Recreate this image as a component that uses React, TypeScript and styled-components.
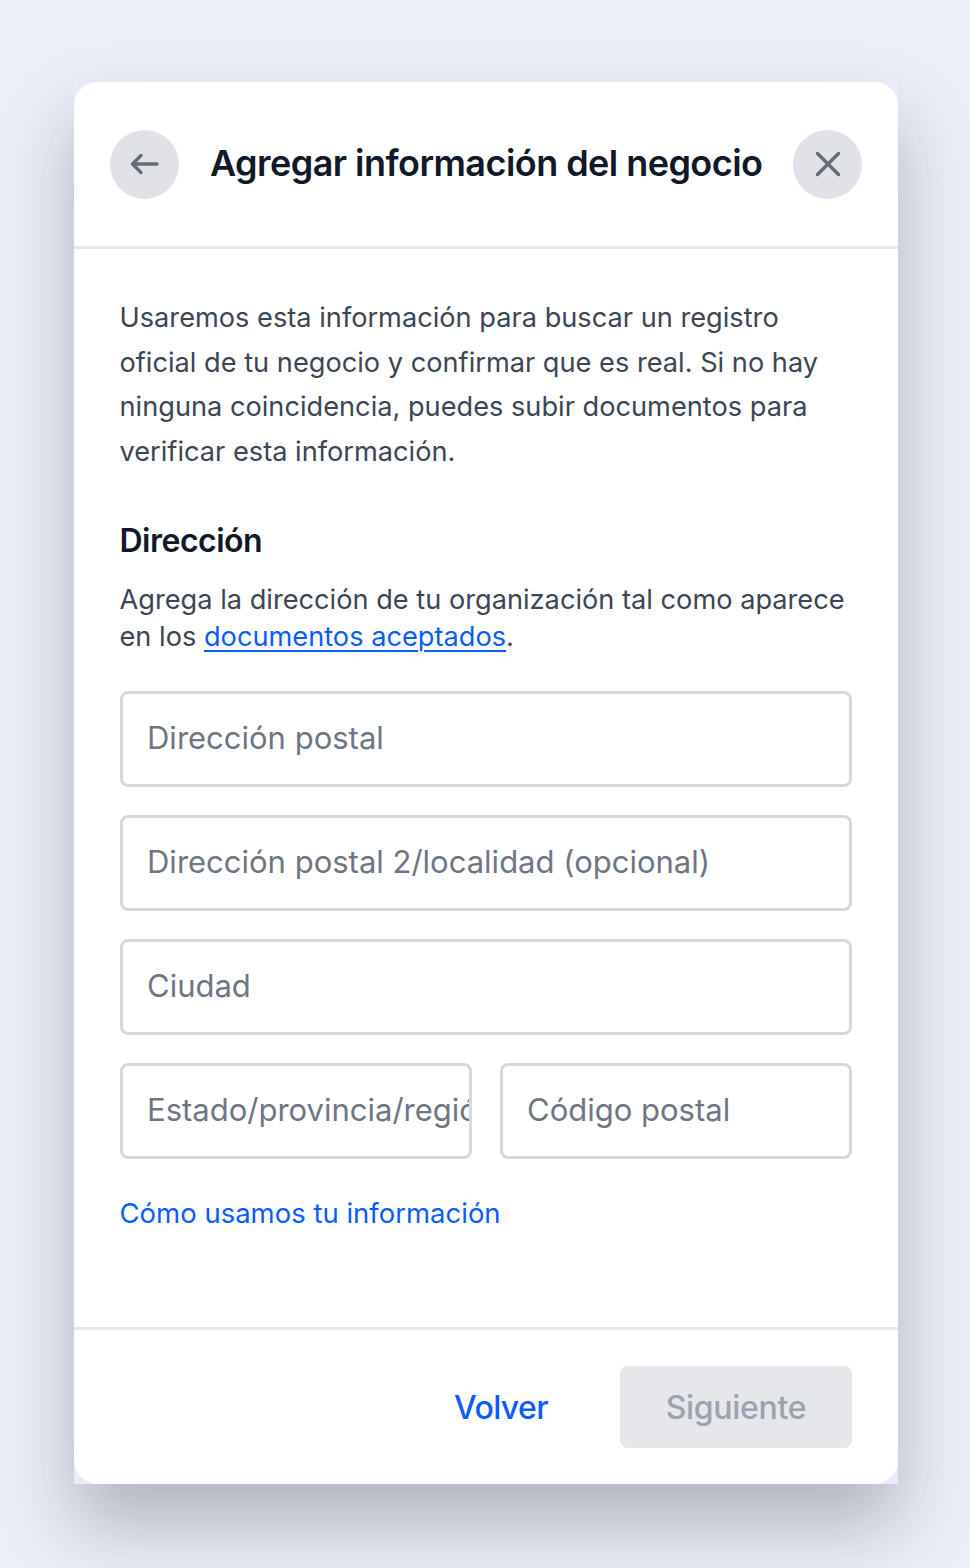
import React from 'react';
import { styled, createGlobalStyle } from 'styled-components';

const GlobalStyle = createGlobalStyle`
    html, body { margin: 0; padding: 0; }
    body { background-color: #ebeff8; font-family: Inter, "Liberation Sans", sans-serif; -webkit-font-smoothing: antialiased; }
`;

const Page = styled.div`
    width: 970px; height: 1568px; box-sizing: border-box; padding: 82px 72px 0 74px; overflow: hidden;
`;

// the shadow sits on a square frame, so the page colour shows behind the rounded corners
const ModalFrame = styled.div`
    width: 824px; height: 1402px; background-color: #e9ecf8;
    box-shadow: 0 40px 70px rgba(45, 45, 60, 0.31);
`;

const Modal = styled.div`
    width: 100%; height: 100%; box-sizing: border-box; background-color: #fff; border-radius: 24px;
    display: flex; flex-direction: column;
`;

const Header = styled.header`
    height: 167px; box-sizing: border-box; border-bottom: 3px solid #e5e7eb; padding: 0 36px;
    display: flex; align-items: center; justify-content: space-between;
`;

const RoundButton = styled.button`
    width: 69px; height: 69px; border-radius: 50%; border: none; background-color: #e1e2e7; color: #666b75; padding: 0;
    display: flex; align-items: center; justify-content: center; flex-shrink: 0;
`;

const Title = styled.h1`
    flex: 1; margin: 0 0 2px 31px; font-size: 36px; line-height: 44px; font-weight: 600; letter-spacing: -0.55px; color: #111827;
`;

const Body = styled.div`
    flex: 1; padding: 47px 46px 0; display: flex; flex-direction: column;
`;

const Intro = styled.p`
    margin: 0 0 0 -0.5px; font-size: 27.2px; line-height: 44.7px; color: #3d4654;
`;

const SectionTitle = styled.h2`
    margin: 46px 0 0 -0.5px; font-size: 32px; line-height: 40px; font-weight: 600; letter-spacing: -0.5px; color: #111827;
`;

const SectionText = styled.p`
    margin: 20px 0 0 -0.5px; font-size: 27.2px; line-height: 37px; color: #3d4654;
`;

const InlineLink = styled.a`
    color: #0b5cff; text-decoration: underline; text-underline-offset: 4px; text-decoration-thickness: 2px;
`;

const Fields = styled.div`
    margin-top: 36px; display: grid; grid-template-columns: 1fr 1fr; gap: 28px;
`;

const Input = styled.input<{ $wide?: boolean }>`
    grid-column: ${({ $wide }) => ($wide ? '1 / -1' : 'auto')};
    width: 100%; height: 96px; box-sizing: border-box; min-width: 0; background-color: #fff;
    border: 3px solid #d5d8df; border-radius: 8px; padding: 0 0 2px 24px;
    font-family: inherit; font-size: 31px; color: #111827; outline: none;
    &::placeholder { color: #6f7683; opacity: 1; }
`;

const InfoLink = styled.a`
    margin: 36px 0 0 -0.5px; font-size: 27.5px; line-height: 36px; color: #0b5cff;
`;

const Footer = styled.footer`
    height: 157px; box-sizing: border-box; border-top: 3px solid #e5e7eb; padding: 36px 46px 0;
    display: flex; justify-content: flex-end; align-items: flex-start; gap: 72px;
`;

const BackLink = styled.a`
    font-size: 32px; line-height: 84px; font-weight: 500; letter-spacing: -0.6px; color: #0b5cff;
`;

const NextButton = styled.button`
    width: 232px; height: 82px; border: none; border-radius: 8px; background-color: #e5e7eb; color: #9ca3af;
    font-family: inherit; font-size: 32px; font-weight: 500; letter-spacing: -0.3px;
`;

const App: React.FC = () => (
    <Page>
        <GlobalStyle />
        <ModalFrame>
            <Modal>
                <Header>
                    <RoundButton aria-label="Volver">
                        <svg width="32" height="32" viewBox="0 0 32 32" fill="none" stroke="currentColor" strokeWidth="3.4" strokeLinecap="round" strokeLinejoin="round">
                            <path d="M28 16H3.5M12 7.5L3.5 16l8.5 8.5" />
                        </svg>
                    </RoundButton>
                    <Title>Agregar información del negocio</Title>
                    <RoundButton aria-label="Cerrar">
                        <svg width="32" height="32" viewBox="0 0 32 32" fill="none" stroke="currentColor" strokeWidth="3.4" strokeLinecap="round">
                            <path d="M5.5 5.5l21 21M26.5 5.5l-21 21" />
                        </svg>
                    </RoundButton>
                </Header>
                <Body>
                    <Intro>
                        Usaremos esta información para buscar un registro<br />
                        oficial de tu negocio y confirmar que es real. Si no hay<br />
                        ninguna coincidencia, puedes subir documentos para<br />
                        verificar esta información.
                    </Intro>
                    <SectionTitle>Dirección</SectionTitle>
                    <SectionText>
                        Agrega la dirección de tu organización tal como aparece<br />
                        en los <InlineLink>documentos aceptados</InlineLink>.
                    </SectionText>
                    <Fields>
                        <Input $wide placeholder="Dirección postal" />
                        <Input $wide placeholder="Dirección postal 2/localidad (opcional)" />
                        <Input $wide placeholder="Ciudad" />
                        <Input placeholder="Estado/provincia/región" />
                        <Input placeholder="Código postal" />
                    </Fields>
                    <InfoLink>Cómo usamos tu información</InfoLink>
                </Body>
                <Footer>
                    <BackLink>Volver</BackLink>
                    <NextButton disabled>Siguiente</NextButton>
                </Footer>
            </Modal>
        </ModalFrame>
    </Page>
);

export default App;
